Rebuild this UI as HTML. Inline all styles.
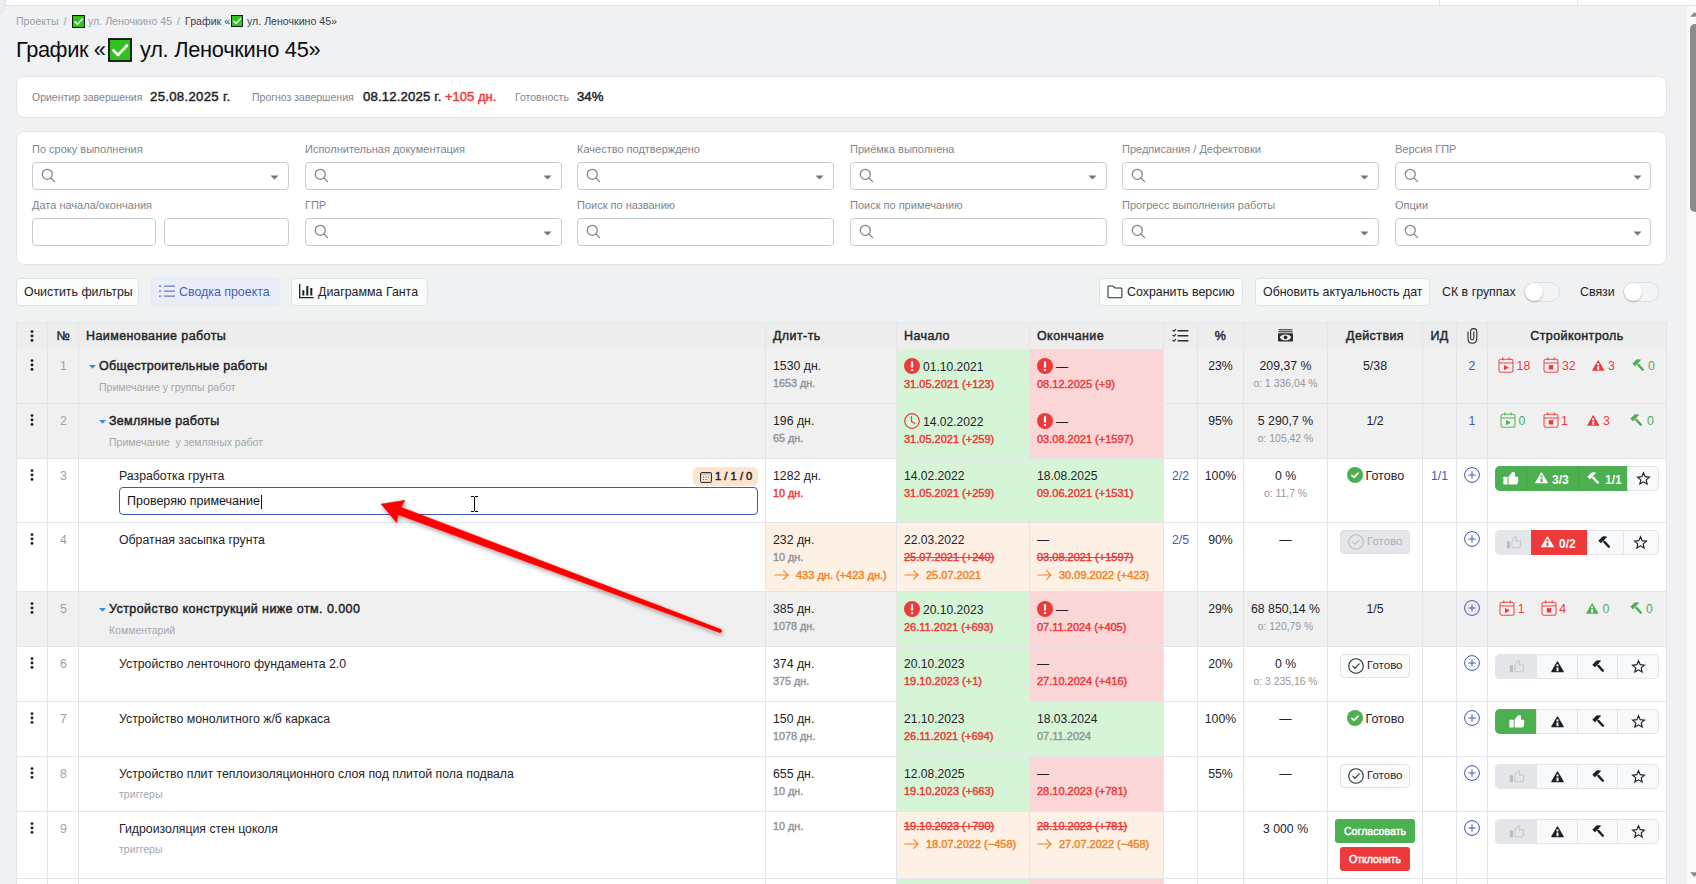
<!DOCTYPE html>
<html><head><meta charset="utf-8"><style>
html,body{margin:0;padding:0;width:1696px;height:884px;overflow:hidden;background:#f0f1f3;font-family:"Liberation Sans", sans-serif;}
.r{position:absolute;box-sizing:border-box;}
.t{position:absolute;white-space:nowrap;}
.card{background:#fff;border:1px solid #e3e5e9;border-radius:8px;}
.inp{background:#fff;border:1px solid #c8ccd2;border-radius:4px;}
.btn{background:#fafbfb;border:1px solid #dfe2e6;border-radius:4px;}
svg.r{overflow:visible}
</style></head><body>
<div class="r" style="left:0px;top:0px;width:1696px;height:5px;background:#ffffff;"></div>
<div class="r" style="left:0px;top:5px;width:1696px;height:1px;background:#e1e3e7;"></div>
<div class="r" style="left:1439px;top:0px;width:1px;height:5px;background:#e1e3e7;"></div>
<div class="r" style="left:1577px;top:0px;width:1px;height:5px;background:#e1e3e7;"></div>
<div class="r" style="left:-28px;top:-15px;width:34px;height:34px;border-radius:50%;background:#eceef1;border:1px solid #dcdee2"></div>
<div class="t" style="left:16px;top:15.46px;font-size:10.6px;line-height:12.72px;font-weight:400;color:#9aa0a8;">Проекты</div>
<div class="t" style="left:63.5px;top:15.46px;font-size:10.6px;line-height:12.72px;font-weight:400;color:#9aa0a8;">/</div>
<svg class="r" style="left:72px;top:15px" width="13" height="13" viewBox="0 0 24 24"><rect x="1" y="1" width="22" height="22" fill="#31c31d" stroke="#0d0d0d" stroke-width="1.8"/><path d="M5.5 12.5 L10 17 L19 7.5" fill="none" stroke="#fff" stroke-width="2.6" stroke-linecap="round" stroke-linejoin="round"/></svg>
<div class="t" style="left:88px;top:15.46px;font-size:10.6px;line-height:12.72px;font-weight:400;color:#9aa0a8;">ул. Леночкино 45</div>
<div class="t" style="left:177px;top:15.46px;font-size:10.6px;line-height:12.72px;font-weight:400;color:#9aa0a8;">/</div>
<div class="t" style="left:185px;top:15.46px;font-size:10.6px;line-height:12.72px;font-weight:400;color:#3a3f47;">График «</div>
<svg class="r" style="left:231px;top:15px" width="12" height="12" viewBox="0 0 24 24"><rect x="1" y="1" width="22" height="22" fill="#31c31d" stroke="#0d0d0d" stroke-width="1.8"/><path d="M5.5 12.5 L10 17 L19 7.5" fill="none" stroke="#fff" stroke-width="2.6" stroke-linecap="round" stroke-linejoin="round"/></svg>
<div class="t" style="left:247px;top:15.46px;font-size:10.6px;line-height:12.72px;font-weight:400;color:#3a3f47;">ул. Леночкино 45»</div>
<div class="t" style="left:16px;top:36.86px;font-size:21.8px;line-height:26.16px;font-weight:400;color:#0c0d0f;letter-spacing:-0.4px;">График «</div>
<svg class="r" style="left:108px;top:38px" width="24" height="24" viewBox="0 0 24 24"><rect x="1" y="1" width="22" height="22" fill="#31c31d" stroke="#0d0d0d" stroke-width="1.8"/><path d="M5.5 12.5 L10 17 L19 7.5" fill="none" stroke="#fff" stroke-width="2.6" stroke-linecap="round" stroke-linejoin="round"/></svg>
<div class="t" style="left:140px;top:36.86px;font-size:21.8px;line-height:26.16px;font-weight:400;color:#0c0d0f;letter-spacing:-0.27px;">ул. Леночкино 45»</div>
<div class="r card" style="left:16px;top:76px;width:1651px;height:42px;"></div>
<div class="t" style="left:32px;top:90.56px;font-size:10.5px;line-height:12.6px;font-weight:400;color:#80858d;">Ориентир завершения</div>
<div class="t" style="left:150px;top:89.00px;font-size:13.2px;line-height:15.84px;font-weight:400;color:#1f2328;-webkit-text-stroke:0.45px #1f2328;letter-spacing:0.3px;">25.08.2025 г.</div>
<div class="t" style="left:252px;top:90.56px;font-size:10.5px;line-height:12.6px;font-weight:400;color:#80858d;">Прогноз завершения</div>
<div class="t" style="left:363px;top:89.00px;font-size:13.2px;line-height:15.84px;font-weight:400;color:#1f2328;-webkit-text-stroke:0.45px #1f2328;letter-spacing:0.15px;">08.12.2025 г.</div>
<div class="t" style="left:445px;top:89.19px;font-size:13px;line-height:15.6px;font-weight:400;color:#ee3a3a;-webkit-text-stroke:0.45px #ee3a3a;">+105 дн.</div>
<div class="t" style="left:515px;top:90.56px;font-size:10.5px;line-height:12.6px;font-weight:400;color:#80858d;">Готовность</div>
<div class="t" style="left:577px;top:89.00px;font-size:13.2px;line-height:15.84px;font-weight:400;color:#1f2328;-webkit-text-stroke:0.45px #1f2328;">34%</div>
<div class="r card" style="left:16px;top:131px;width:1651px;height:134px;"></div>
<div class="t" style="left:32px;top:143.09px;font-size:11px;line-height:13.2px;font-weight:400;color:#80858d;">По сроку выполнения</div>
<div class="r inp" style="left:32px;top:162px;width:257px;height:28px;"></div>
<svg class="r" style="left:41px;top:168px" width="15" height="15" viewBox="0 0 15 15"><circle cx="6.3" cy="6.3" r="5" fill="none" stroke="#7e848c" stroke-width="1.25"/><path d="M10 10 L13.6 13.6" stroke="#7e848c" stroke-width="1.3" stroke-linecap="round"/></svg>
<svg class="r" style="left:270px;top:175px" width="9" height="5" viewBox="0 0 9 5"><path d="M0.5 0.5 H8.5 L4.5 4.5 Z" fill="#6f757d"/></svg>
<div class="t" style="left:32px;top:199.09px;font-size:11px;line-height:13.2px;font-weight:400;color:#80858d;">Дата начала/окончания</div>
<div class="r inp" style="left:32px;top:218px;width:124px;height:28px;"></div>
<div class="r inp" style="left:164px;top:218px;width:125px;height:28px;"></div>
<div class="t" style="left:305px;top:143.09px;font-size:11px;line-height:13.2px;font-weight:400;color:#80858d;">Исполнительная документация</div>
<div class="r inp" style="left:305px;top:162px;width:257px;height:28px;"></div>
<svg class="r" style="left:314px;top:168px" width="15" height="15" viewBox="0 0 15 15"><circle cx="6.3" cy="6.3" r="5" fill="none" stroke="#7e848c" stroke-width="1.25"/><path d="M10 10 L13.6 13.6" stroke="#7e848c" stroke-width="1.3" stroke-linecap="round"/></svg>
<svg class="r" style="left:543px;top:175px" width="9" height="5" viewBox="0 0 9 5"><path d="M0.5 0.5 H8.5 L4.5 4.5 Z" fill="#6f757d"/></svg>
<div class="t" style="left:305px;top:199.09px;font-size:11px;line-height:13.2px;font-weight:400;color:#80858d;">ГПР</div>
<div class="r inp" style="left:305px;top:218px;width:257px;height:28px;"></div>
<svg class="r" style="left:314px;top:224px" width="15" height="15" viewBox="0 0 15 15"><circle cx="6.3" cy="6.3" r="5" fill="none" stroke="#7e848c" stroke-width="1.25"/><path d="M10 10 L13.6 13.6" stroke="#7e848c" stroke-width="1.3" stroke-linecap="round"/></svg>
<svg class="r" style="left:543px;top:231px" width="9" height="5" viewBox="0 0 9 5"><path d="M0.5 0.5 H8.5 L4.5 4.5 Z" fill="#6f757d"/></svg>
<div class="t" style="left:577px;top:143.09px;font-size:11px;line-height:13.2px;font-weight:400;color:#80858d;">Качество подтверждено</div>
<div class="r inp" style="left:577px;top:162px;width:257px;height:28px;"></div>
<svg class="r" style="left:586px;top:168px" width="15" height="15" viewBox="0 0 15 15"><circle cx="6.3" cy="6.3" r="5" fill="none" stroke="#7e848c" stroke-width="1.25"/><path d="M10 10 L13.6 13.6" stroke="#7e848c" stroke-width="1.3" stroke-linecap="round"/></svg>
<svg class="r" style="left:815px;top:175px" width="9" height="5" viewBox="0 0 9 5"><path d="M0.5 0.5 H8.5 L4.5 4.5 Z" fill="#6f757d"/></svg>
<div class="t" style="left:577px;top:199.09px;font-size:11px;line-height:13.2px;font-weight:400;color:#80858d;">Поиск по названию</div>
<div class="r inp" style="left:577px;top:218px;width:257px;height:28px;"></div>
<svg class="r" style="left:586px;top:224px" width="15" height="15" viewBox="0 0 15 15"><circle cx="6.3" cy="6.3" r="5" fill="none" stroke="#7e848c" stroke-width="1.25"/><path d="M10 10 L13.6 13.6" stroke="#7e848c" stroke-width="1.3" stroke-linecap="round"/></svg>
<div class="t" style="left:850px;top:143.09px;font-size:11px;line-height:13.2px;font-weight:400;color:#80858d;">Приёмка выполнена</div>
<div class="r inp" style="left:850px;top:162px;width:257px;height:28px;"></div>
<svg class="r" style="left:859px;top:168px" width="15" height="15" viewBox="0 0 15 15"><circle cx="6.3" cy="6.3" r="5" fill="none" stroke="#7e848c" stroke-width="1.25"/><path d="M10 10 L13.6 13.6" stroke="#7e848c" stroke-width="1.3" stroke-linecap="round"/></svg>
<svg class="r" style="left:1088px;top:175px" width="9" height="5" viewBox="0 0 9 5"><path d="M0.5 0.5 H8.5 L4.5 4.5 Z" fill="#6f757d"/></svg>
<div class="t" style="left:850px;top:199.09px;font-size:11px;line-height:13.2px;font-weight:400;color:#80858d;">Поиск по примечанию</div>
<div class="r inp" style="left:850px;top:218px;width:257px;height:28px;"></div>
<svg class="r" style="left:859px;top:224px" width="15" height="15" viewBox="0 0 15 15"><circle cx="6.3" cy="6.3" r="5" fill="none" stroke="#7e848c" stroke-width="1.25"/><path d="M10 10 L13.6 13.6" stroke="#7e848c" stroke-width="1.3" stroke-linecap="round"/></svg>
<div class="t" style="left:1122px;top:143.09px;font-size:11px;line-height:13.2px;font-weight:400;color:#80858d;">Предписания / Дефектовки</div>
<div class="r inp" style="left:1122px;top:162px;width:257px;height:28px;"></div>
<svg class="r" style="left:1131px;top:168px" width="15" height="15" viewBox="0 0 15 15"><circle cx="6.3" cy="6.3" r="5" fill="none" stroke="#7e848c" stroke-width="1.25"/><path d="M10 10 L13.6 13.6" stroke="#7e848c" stroke-width="1.3" stroke-linecap="round"/></svg>
<svg class="r" style="left:1360px;top:175px" width="9" height="5" viewBox="0 0 9 5"><path d="M0.5 0.5 H8.5 L4.5 4.5 Z" fill="#6f757d"/></svg>
<div class="t" style="left:1122px;top:199.09px;font-size:11px;line-height:13.2px;font-weight:400;color:#80858d;">Прогресс выполнения работы</div>
<div class="r inp" style="left:1122px;top:218px;width:257px;height:28px;"></div>
<svg class="r" style="left:1131px;top:224px" width="15" height="15" viewBox="0 0 15 15"><circle cx="6.3" cy="6.3" r="5" fill="none" stroke="#7e848c" stroke-width="1.25"/><path d="M10 10 L13.6 13.6" stroke="#7e848c" stroke-width="1.3" stroke-linecap="round"/></svg>
<svg class="r" style="left:1360px;top:231px" width="9" height="5" viewBox="0 0 9 5"><path d="M0.5 0.5 H8.5 L4.5 4.5 Z" fill="#6f757d"/></svg>
<div class="t" style="left:1395px;top:143.09px;font-size:11px;line-height:13.2px;font-weight:400;color:#80858d;">Версия ГПР</div>
<div class="r inp" style="left:1395px;top:162px;width:256px;height:28px;"></div>
<svg class="r" style="left:1404px;top:168px" width="15" height="15" viewBox="0 0 15 15"><circle cx="6.3" cy="6.3" r="5" fill="none" stroke="#7e848c" stroke-width="1.25"/><path d="M10 10 L13.6 13.6" stroke="#7e848c" stroke-width="1.3" stroke-linecap="round"/></svg>
<svg class="r" style="left:1633px;top:175px" width="9" height="5" viewBox="0 0 9 5"><path d="M0.5 0.5 H8.5 L4.5 4.5 Z" fill="#6f757d"/></svg>
<div class="t" style="left:1395px;top:199.09px;font-size:11px;line-height:13.2px;font-weight:400;color:#80858d;">Опции</div>
<div class="r inp" style="left:1395px;top:218px;width:256px;height:28px;"></div>
<svg class="r" style="left:1404px;top:224px" width="15" height="15" viewBox="0 0 15 15"><circle cx="6.3" cy="6.3" r="5" fill="none" stroke="#7e848c" stroke-width="1.25"/><path d="M10 10 L13.6 13.6" stroke="#7e848c" stroke-width="1.3" stroke-linecap="round"/></svg>
<svg class="r" style="left:1633px;top:231px" width="9" height="5" viewBox="0 0 9 5"><path d="M0.5 0.5 H8.5 L4.5 4.5 Z" fill="#6f757d"/></svg>
<div class="r btn" style="left:16px;top:278px;width:123px;height:28px;"></div>
<div class="t" style="left:24px;top:284.76px;font-size:12.4px;line-height:14.88px;font-weight:400;color:#1f2328;">Очистить фильтры</div>
<div class="r btn" style="left:151px;top:278px;width:128px;height:28px;background:#e8edf8;border-color:#e2e7f3"></div>
<svg class="r" style="left:159px;top:285px" width="17" height="13"><rect x="0" y="0.6" width="2.3" height="1" fill="#4a5db8"/><rect x="5" y="0.6" width="11" height="1" fill="#4a5db8"/><rect x="0" y="5.6" width="2.3" height="1" fill="#4a5db8"/><rect x="5" y="5.6" width="11" height="1" fill="#4a5db8"/><rect x="0" y="10.6" width="2.3" height="1" fill="#4a5db8"/><rect x="5" y="10.6" width="11" height="1" fill="#4a5db8"/></svg>
<div class="t" style="left:179px;top:284.76px;font-size:12.4px;line-height:14.88px;font-weight:400;color:#4a5db8;">Сводка проекта</div>
<div class="r btn" style="left:291px;top:278px;width:137px;height:28px;"></div>
<svg class="r" style="left:299px;top:284px" width="15" height="15" viewBox="0 0 15 15"><path d="M0.7 0 V13.7 H14.6" fill="none" stroke="#1f2328" stroke-width="1.3"/><rect x="3.3" y="6.3" width="2" height="5.2" fill="#1f2328"/><rect x="7.3" y="2" width="2" height="9.5" fill="#1f2328"/><rect x="11.3" y="4" width="2" height="7.5" fill="#1f2328"/></svg>
<div class="t" style="left:318px;top:284.76px;font-size:12.4px;line-height:14.88px;font-weight:400;color:#1f2328;">Диаграмма Ганта</div>
<div class="r btn" style="left:1099px;top:278px;width:144px;height:28px;"></div>
<svg class="r" style="left:1107px;top:284.5px" width="16" height="14" viewBox="0 0 16 14"><path d="M1 1.8 Q1 0.9 1.9 0.9 H5.6 Q6 0.9 6.3 1.2 L7.8 2.9 H14 Q14.9 2.9 14.9 3.8 V11.8 Q14.9 12.7 14 12.7 H1.9 Q1 12.7 1 11.8 Z" fill="none" stroke="#2a2e34" stroke-width="1.05"/></svg>
<div class="t" style="left:1127px;top:284.76px;font-size:12.4px;line-height:14.88px;font-weight:400;color:#1f2328;">Сохранить версию</div>
<div class="r btn" style="left:1255px;top:278px;width:175px;height:28px;"></div>
<div class="t" style="left:1263px;top:284.76px;font-size:12.4px;line-height:14.88px;font-weight:400;color:#1f2328;">Обновить актуальность дат</div>
<div class="t" style="left:1442px;top:284.76px;font-size:12.4px;line-height:14.88px;font-weight:400;color:#1f2328;">СК в группах</div>
<div class="r" style="left:1524px;top:282px;width:36px;height:20px;border-radius:10px;background:#f3f4f6;border:1px solid #dcdfe3"></div>
<div class="r" style="left:1525px;top:283px;width:18px;height:18px;border-radius:50%;background:#fff;box-shadow:0 1px 2px rgba(0,0,0,.25)"></div>
<div class="t" style="left:1580px;top:284.76px;font-size:12.4px;line-height:14.88px;font-weight:400;color:#1f2328;">Связи</div>
<div class="r" style="left:1623px;top:282px;width:36px;height:20px;border-radius:10px;background:#f3f4f6;border:1px solid #dcdfe3"></div>
<div class="r" style="left:1624px;top:283px;width:18px;height:18px;border-radius:50%;background:#fff;box-shadow:0 1px 2px rgba(0,0,0,.25)"></div>
<div class="r" style="left:16px;top:322px;width:1651px;height:1px;background:#e3e5e9;"></div>
<div class="r" style="left:17px;top:323px;width:1649px;height:26px;background:#ededed;"></div>
<div class="r" style="left:17px;top:349px;width:1649px;height:54px;background:#f0f0f0;"></div>
<div class="r" style="left:897px;top:349px;width:132px;height:54px;background:#d6f5d6;"></div>
<div class="r" style="left:1030px;top:349px;width:133px;height:54px;background:#fbd6d6;"></div>
<div class="r" style="left:16px;top:403px;width:1651px;height:1px;background:#e3e5e9;"></div>
<div class="r" style="left:17px;top:404px;width:1649px;height:54px;background:#f0f0f0;"></div>
<div class="r" style="left:897px;top:404px;width:132px;height:54px;background:#d6f5d6;"></div>
<div class="r" style="left:1030px;top:404px;width:133px;height:54px;background:#fbd6d6;"></div>
<div class="r" style="left:16px;top:458px;width:1651px;height:1px;background:#e3e5e9;"></div>
<div class="r" style="left:17px;top:459px;width:1649px;height:63px;background:#ffffff;"></div>
<div class="r" style="left:897px;top:459px;width:132px;height:63px;background:#d6f5d6;"></div>
<div class="r" style="left:1030px;top:459px;width:133px;height:63px;background:#d6f5d6;"></div>
<div class="r" style="left:16px;top:522px;width:1651px;height:1px;background:#e3e5e9;"></div>
<div class="r" style="left:17px;top:523px;width:1649px;height:68px;background:#ffffff;"></div>
<div class="r" style="left:766px;top:523px;width:130px;height:68px;background:#fdf0e5;"></div>
<div class="r" style="left:897px;top:523px;width:132px;height:68px;background:#fdf0e5;"></div>
<div class="r" style="left:1030px;top:523px;width:133px;height:68px;background:#fdf0e5;"></div>
<div class="r" style="left:16px;top:591px;width:1651px;height:1px;background:#e3e5e9;"></div>
<div class="r" style="left:17px;top:592px;width:1649px;height:54px;background:#f0f0f0;"></div>
<div class="r" style="left:897px;top:592px;width:132px;height:54px;background:#d6f5d6;"></div>
<div class="r" style="left:1030px;top:592px;width:133px;height:54px;background:#fbd6d6;"></div>
<div class="r" style="left:16px;top:646px;width:1651px;height:1px;background:#e3e5e9;"></div>
<div class="r" style="left:17px;top:647px;width:1649px;height:54px;background:#ffffff;"></div>
<div class="r" style="left:897px;top:647px;width:132px;height:54px;background:#d6f5d6;"></div>
<div class="r" style="left:1030px;top:647px;width:133px;height:54px;background:#fbd6d6;"></div>
<div class="r" style="left:16px;top:701px;width:1651px;height:1px;background:#e3e5e9;"></div>
<div class="r" style="left:17px;top:702px;width:1649px;height:54px;background:#ffffff;"></div>
<div class="r" style="left:897px;top:702px;width:132px;height:54px;background:#d6f5d6;"></div>
<div class="r" style="left:1030px;top:702px;width:133px;height:54px;background:#d6f5d6;"></div>
<div class="r" style="left:16px;top:756px;width:1651px;height:1px;background:#e3e5e9;"></div>
<div class="r" style="left:17px;top:757px;width:1649px;height:54px;background:#ffffff;"></div>
<div class="r" style="left:897px;top:757px;width:132px;height:54px;background:#d6f5d6;"></div>
<div class="r" style="left:1030px;top:757px;width:133px;height:54px;background:#fbd6d6;"></div>
<div class="r" style="left:16px;top:811px;width:1651px;height:1px;background:#e3e5e9;"></div>
<div class="r" style="left:17px;top:812px;width:1649px;height:66px;background:#ffffff;"></div>
<div class="r" style="left:897px;top:812px;width:132px;height:66px;background:#fdf0e5;"></div>
<div class="r" style="left:1030px;top:812px;width:133px;height:66px;background:#fdf0e5;"></div>
<div class="r" style="left:16px;top:878px;width:1651px;height:1px;background:#e3e5e9;"></div>
<div class="r" style="left:17px;top:879px;width:1649px;height:21px;background:#ffffff;"></div>
<div class="r" style="left:897px;top:879px;width:132px;height:21px;background:#d6f5d6;"></div>
<div class="r" style="left:1030px;top:879px;width:133px;height:21px;background:#fbd6d6;"></div>
<div class="r" style="left:16px;top:900px;width:1651px;height:1px;background:#e3e5e9;"></div>
<div class="r" style="left:16px;top:322px;width:1px;height:562px;background:#e3e5e9;"></div>
<div class="r" style="left:47px;top:322px;width:1px;height:562px;background:#e3e5e9;"></div>
<div class="r" style="left:78px;top:322px;width:1px;height:562px;background:#e3e5e9;"></div>
<div class="r" style="left:765px;top:322px;width:1px;height:562px;background:#e3e5e9;"></div>
<div class="r" style="left:896px;top:322px;width:1px;height:562px;background:#e3e5e9;"></div>
<div class="r" style="left:1029px;top:322px;width:1px;height:562px;background:#e3e5e9;"></div>
<div class="r" style="left:1163px;top:322px;width:1px;height:562px;background:#e3e5e9;"></div>
<div class="r" style="left:1197px;top:322px;width:1px;height:562px;background:#e3e5e9;"></div>
<div class="r" style="left:1243px;top:322px;width:1px;height:562px;background:#e3e5e9;"></div>
<div class="r" style="left:1327px;top:322px;width:1px;height:562px;background:#e3e5e9;"></div>
<div class="r" style="left:1422px;top:322px;width:1px;height:562px;background:#e3e5e9;"></div>
<div class="r" style="left:1456px;top:322px;width:1px;height:562px;background:#e3e5e9;"></div>
<div class="r" style="left:1487px;top:322px;width:1px;height:562px;background:#e3e5e9;"></div>
<div class="r" style="left:1666px;top:322px;width:1px;height:562px;background:#e3e5e9;"></div>
<svg class="r" style="left:30px;top:330px" width="4" height="12" viewBox="0 0 4 12"><circle cx="2" cy="1.6" r="1.45" fill="#1c1f24"/><circle cx="2" cy="6" r="1.45" fill="#1c1f24"/><circle cx="2" cy="10.4" r="1.45" fill="#1c1f24"/></svg>
<div class="t" style="left:48px;top:328.67px;font-size:12.5px;line-height:15.0px;font-weight:400;color:#24272c;-webkit-text-stroke:0.45px #24272c;width:31px;text-align:center;letter-spacing:0.4px;">№</div>
<div class="t" style="left:86px;top:328.67px;font-size:12.5px;line-height:15.0px;font-weight:400;color:#24272c;-webkit-text-stroke:0.45px #24272c;letter-spacing:0.4px;">Наименование работы</div>
<div class="t" style="left:773px;top:328.67px;font-size:12.5px;line-height:15.0px;font-weight:400;color:#24272c;-webkit-text-stroke:0.45px #24272c;letter-spacing:0.4px;">Длит-ть</div>
<div class="t" style="left:904px;top:328.67px;font-size:12.5px;line-height:15.0px;font-weight:400;color:#24272c;-webkit-text-stroke:0.45px #24272c;letter-spacing:0.4px;">Начало</div>
<div class="t" style="left:1037px;top:328.67px;font-size:12.5px;line-height:15.0px;font-weight:400;color:#24272c;-webkit-text-stroke:0.45px #24272c;letter-spacing:0.4px;">Окончание</div>
<svg class="r" style="left:1172px;top:329px" width="17" height="14"><path d="M0.6 1.0 L2 2.2 L4 0.20000000000000018" fill="none" stroke="#2a2d33" stroke-width="1.1"/><rect x="5.5" y="0.9000000000000001" width="11" height="1.5" rx="0.6" fill="#2a2d33"/><path d="M0.6 6.0 L2 7.199999999999999 L4 5.199999999999999" fill="none" stroke="#2a2d33" stroke-width="1.1"/><rect x="5.5" y="5.8999999999999995" width="11" height="1.5" rx="0.6" fill="#2a2d33"/><path d="M0.6 11.0 L2 12.2 L4 10.2" fill="none" stroke="#2a2d33" stroke-width="1.1"/><rect x="5.5" y="10.9" width="11" height="1.5" rx="0.6" fill="#2a2d33"/></svg>
<div class="t" style="left:1198px;top:328.67px;font-size:12.5px;line-height:15.0px;font-weight:400;color:#24272c;-webkit-text-stroke:0.45px #24272c;width:45px;text-align:center;letter-spacing:0.4px;">%</div>
<svg class="r" style="left:1278px;top:329px" width="15" height="13" viewBox="0 0 15 13"><rect x="0.5" y="0" width="14" height="1.4" fill="#2a2d33" opacity="0.75"/><rect x="0.5" y="2" width="14" height="1.4" fill="#2a2d33" opacity="0.75"/><rect x="0" y="4.2" width="15" height="8.3" rx="1" fill="#2a2d33"/><ellipse cx="7.5" cy="8.35" rx="5.5" ry="2.9" fill="#ededed"/><circle cx="7.5" cy="8.35" r="1.9" fill="#2a2d33"/></svg>
<div class="t" style="left:1328px;top:328.67px;font-size:12.5px;line-height:15.0px;font-weight:400;color:#24272c;-webkit-text-stroke:0.45px #24272c;width:94px;text-align:center;letter-spacing:0.4px;">Действия</div>
<div class="t" style="left:1423px;top:328.67px;font-size:12.5px;line-height:15.0px;font-weight:400;color:#24272c;-webkit-text-stroke:0.45px #24272c;width:33px;text-align:center;letter-spacing:0.4px;">ИД</div>
<svg class="r" style="left:1467px;top:327.5px" width="11" height="16" viewBox="0 0 11 16"><path d="M1 3.5 V10.5 Q1 15.3 5.3 15.3 Q9.8 15.3 9.8 10.5 V4 Q9.8 0.6 6.8 0.6 Q3.6 0.6 3.6 4 V10.2 Q3.6 11.8 5.2 11.8 Q6.8 11.8 6.8 10.2 V3.5" fill="none" stroke="#2a2d33" stroke-width="1.1"/></svg>
<div class="t" style="left:1488px;top:328.67px;font-size:12.5px;line-height:15.0px;font-weight:400;color:#24272c;-webkit-text-stroke:0.45px #24272c;width:178px;text-align:center;letter-spacing:0.4px;">Стройконтроль</div>
<svg class="r" style="left:30.3px;top:358.8px" width="4" height="12" viewBox="0 0 4 12"><circle cx="2" cy="1.6" r="1.45" fill="#1c1f24"/><circle cx="2" cy="6" r="1.45" fill="#1c1f24"/><circle cx="2" cy="10.4" r="1.45" fill="#1c1f24"/></svg>
<div class="t" style="left:48px;top:358.86px;font-size:12.3px;line-height:14.76px;font-weight:400;color:#9aa0a8;width:31px;text-align:center;">1</div>
<svg class="r" style="left:30.3px;top:413.8px" width="4" height="12" viewBox="0 0 4 12"><circle cx="2" cy="1.6" r="1.45" fill="#1c1f24"/><circle cx="2" cy="6" r="1.45" fill="#1c1f24"/><circle cx="2" cy="10.4" r="1.45" fill="#1c1f24"/></svg>
<div class="t" style="left:48px;top:413.86px;font-size:12.3px;line-height:14.76px;font-weight:400;color:#9aa0a8;width:31px;text-align:center;">2</div>
<svg class="r" style="left:30.3px;top:468.8px" width="4" height="12" viewBox="0 0 4 12"><circle cx="2" cy="1.6" r="1.45" fill="#1c1f24"/><circle cx="2" cy="6" r="1.45" fill="#1c1f24"/><circle cx="2" cy="10.4" r="1.45" fill="#1c1f24"/></svg>
<div class="t" style="left:48px;top:468.86px;font-size:12.3px;line-height:14.76px;font-weight:400;color:#9aa0a8;width:31px;text-align:center;">3</div>
<svg class="r" style="left:30.3px;top:532.8px" width="4" height="12" viewBox="0 0 4 12"><circle cx="2" cy="1.6" r="1.45" fill="#1c1f24"/><circle cx="2" cy="6" r="1.45" fill="#1c1f24"/><circle cx="2" cy="10.4" r="1.45" fill="#1c1f24"/></svg>
<div class="t" style="left:48px;top:532.86px;font-size:12.3px;line-height:14.76px;font-weight:400;color:#9aa0a8;width:31px;text-align:center;">4</div>
<svg class="r" style="left:30.3px;top:601.8px" width="4" height="12" viewBox="0 0 4 12"><circle cx="2" cy="1.6" r="1.45" fill="#1c1f24"/><circle cx="2" cy="6" r="1.45" fill="#1c1f24"/><circle cx="2" cy="10.4" r="1.45" fill="#1c1f24"/></svg>
<div class="t" style="left:48px;top:601.86px;font-size:12.3px;line-height:14.76px;font-weight:400;color:#9aa0a8;width:31px;text-align:center;">5</div>
<svg class="r" style="left:30.3px;top:656.8px" width="4" height="12" viewBox="0 0 4 12"><circle cx="2" cy="1.6" r="1.45" fill="#1c1f24"/><circle cx="2" cy="6" r="1.45" fill="#1c1f24"/><circle cx="2" cy="10.4" r="1.45" fill="#1c1f24"/></svg>
<div class="t" style="left:48px;top:656.86px;font-size:12.3px;line-height:14.76px;font-weight:400;color:#9aa0a8;width:31px;text-align:center;">6</div>
<svg class="r" style="left:30.3px;top:711.8px" width="4" height="12" viewBox="0 0 4 12"><circle cx="2" cy="1.6" r="1.45" fill="#1c1f24"/><circle cx="2" cy="6" r="1.45" fill="#1c1f24"/><circle cx="2" cy="10.4" r="1.45" fill="#1c1f24"/></svg>
<div class="t" style="left:48px;top:711.86px;font-size:12.3px;line-height:14.76px;font-weight:400;color:#9aa0a8;width:31px;text-align:center;">7</div>
<svg class="r" style="left:30.3px;top:766.8px" width="4" height="12" viewBox="0 0 4 12"><circle cx="2" cy="1.6" r="1.45" fill="#1c1f24"/><circle cx="2" cy="6" r="1.45" fill="#1c1f24"/><circle cx="2" cy="10.4" r="1.45" fill="#1c1f24"/></svg>
<div class="t" style="left:48px;top:766.86px;font-size:12.3px;line-height:14.76px;font-weight:400;color:#9aa0a8;width:31px;text-align:center;">8</div>
<svg class="r" style="left:30.3px;top:821.8px" width="4" height="12" viewBox="0 0 4 12"><circle cx="2" cy="1.6" r="1.45" fill="#1c1f24"/><circle cx="2" cy="6" r="1.45" fill="#1c1f24"/><circle cx="2" cy="10.4" r="1.45" fill="#1c1f24"/></svg>
<div class="t" style="left:48px;top:821.86px;font-size:12.3px;line-height:14.76px;font-weight:400;color:#9aa0a8;width:31px;text-align:center;">9</div>
<svg class="r" style="left:89px;top:365px" width="7" height="4" viewBox="0 0 7 4"><path d="M0 0 H7 L3.5 3.8 Z" fill="#2f8ff0"/></svg>
<div class="t" style="left:99px;top:358.67px;font-size:12.5px;line-height:15.0px;font-weight:400;color:#1f2328;-webkit-text-stroke:0.45px #1f2328;letter-spacing:0.3px;">Общестроительные работы</div>
<div class="t" style="left:99px;top:380.56px;font-size:10.5px;line-height:12.6px;font-weight:400;color:#a3a7ad;">Примечание у группы работ</div>
<div class="t" style="left:773px;top:358.86px;font-size:12.3px;line-height:14.76px;font-weight:400;color:#1f2328;">1530 дн.</div>
<div class="t" style="left:773px;top:377.28px;font-size:10.8px;line-height:12.96px;font-weight:400;color:#93979e;-webkit-text-stroke:0.45px #93979e;">1653 дн.</div>
<svg class="r" style="left:904px;top:358px" width="16" height="16" viewBox="0 0 16 16"><circle cx="8" cy="8" r="8" fill="#ee3a3a"/><rect x="6.9" y="3.2" width="2.2" height="6.3" rx="0.6" fill="#fff"/><rect x="6.9" y="10.9" width="2.2" height="2.1" rx="0.4" fill="#fff"/></svg>
<div class="t" style="left:923px;top:360.04px;font-size:12.1px;line-height:14.52px;font-weight:400;color:#1f2328;">01.10.2021</div>
<div class="t" style="left:904px;top:378.09px;font-size:11px;line-height:13.2px;font-weight:400;color:#ee3a3a;-webkit-text-stroke:0.45px #ee3a3a;">31.05.2021 (+123)</div>
<svg class="r" style="left:1036.5px;top:358px" width="16" height="16" viewBox="0 0 16 16"><circle cx="8" cy="8" r="8" fill="#ee3a3a"/><rect x="6.9" y="3.2" width="2.2" height="6.3" rx="0.6" fill="#fff"/><rect x="6.9" y="10.9" width="2.2" height="2.1" rx="0.4" fill="#fff"/></svg>
<div class="t" style="left:1056px;top:360.04px;font-size:12.1px;line-height:14.52px;font-weight:400;color:#1f2328;">—</div>
<div class="t" style="left:1037px;top:378.09px;font-size:11px;line-height:13.2px;font-weight:400;color:#ee3a3a;-webkit-text-stroke:0.45px #ee3a3a;">08.12.2025 (+9)</div>
<div class="t" style="left:1198px;top:358.86px;font-size:12.3px;line-height:14.76px;font-weight:400;color:#1f2328;width:45px;text-align:center;">23%</div>
<div class="t" style="left:1244px;top:358.86px;font-size:12.3px;line-height:14.76px;font-weight:400;color:#1f2328;width:83px;text-align:center;">209,37 %</div>
<div class="t" style="left:1244px;top:378.15px;font-size:10.4px;line-height:12.48px;font-weight:400;color:#93979e;width:83px;text-align:center;">о: 1 336,04 %</div>
<div class="t" style="left:1328px;top:358.86px;font-size:12.3px;line-height:14.76px;font-weight:400;color:#1f2328;width:94px;text-align:center;">5/38</div>
<div class="t" style="left:1457px;top:358.86px;font-size:12.3px;line-height:14.76px;font-weight:400;color:#4458b8;width:30px;text-align:center;">2</div>
<svg class="r" style="left:1498px;top:357px" width="16" height="16" viewBox="0 0 16 16"><path d="M4.8 0.5 V3.3 M11.2 0.5 V3.3" stroke="#ee3a3a" stroke-width="1.1"/><rect x="1" y="2.3" width="14" height="13" rx="2" fill="none" stroke="#ee3a3a" stroke-width="1.05" opacity="0.9"/><path d="M1 6 H15" stroke="#ee3a3a" stroke-width="1.05" opacity="0.9"/><path d="M6 8 L10.8 10.6 L6 13.2 Z" fill="#ee3a3a"/></svg>
<div class="t" style="left:1516.6px;top:358.86px;font-size:12.3px;line-height:14.76px;font-weight:400;color:#ee3a3a;">18</div>
<svg class="r" style="left:1543px;top:357px" width="16" height="16" viewBox="0 0 16 16"><path d="M4.8 0.5 V3.3 M11.2 0.5 V3.3" stroke="#ee3a3a" stroke-width="1.1"/><rect x="1" y="2.3" width="14" height="13" rx="2" fill="none" stroke="#ee3a3a" stroke-width="1.05" opacity="0.9"/><path d="M1 6 H15" stroke="#ee3a3a" stroke-width="1.05" opacity="0.9"/><rect x="5.8" y="8.1" width="4.4" height="4.4" fill="#ee3a3a"/></svg>
<div class="t" style="left:1562px;top:358.86px;font-size:12.3px;line-height:14.76px;font-weight:400;color:#ee3a3a;">32</div>
<svg class="r" style="left:1592px;top:360px" width="12.5" height="11.06" viewBox="0 0 13 11.5"><path d="M6.5 0.3 Q6.9 0.3 7.1 0.7 L12.8 10.6 Q13.1 11.3 12.3 11.3 H0.7 Q-0.1 11.3 0.2 10.6 L5.9 0.7 Q6.1 0.3 6.5 0.3 Z" fill="#ee3a3a"/><rect x="5.5" y="3.4" width="2" height="2" fill="#fff"/><rect x="5.5" y="6.5" width="2" height="3.7" fill="#fff"/></svg>
<div class="t" style="left:1608px;top:358.86px;font-size:12.3px;line-height:14.76px;font-weight:400;color:#ee3a3a;">3</div>
<svg class="r" style="left:1632px;top:359px" width="12" height="12" viewBox="0 0 13 13"><path d="M0.3 5.2 L4.6 0.9 Q5.3 0.3 6.3 0.3 L9.4 0.6 L9.6 1.5 L8.4 2.3 L7.6 3.4 L3.2 7.8 Z" fill="#4caf50"/><path d="M6.9 6.4 L11.8 11.6" stroke="#4caf50" stroke-width="2.6" stroke-linecap="round"/></svg>
<div class="t" style="left:1648px;top:358.86px;font-size:12.3px;line-height:14.76px;font-weight:400;color:#4caf50;">0</div>
<svg class="r" style="left:99px;top:420px" width="7" height="4" viewBox="0 0 7 4"><path d="M0 0 H7 L3.5 3.8 Z" fill="#2f8ff0"/></svg>
<div class="t" style="left:109px;top:413.67px;font-size:12.5px;line-height:15.0px;font-weight:400;color:#1f2328;-webkit-text-stroke:0.45px #1f2328;letter-spacing:0.3px;">Земляные работы</div>
<div class="t" style="left:109px;top:435.56px;font-size:10.5px;line-height:12.6px;font-weight:400;color:#a3a7ad;">Примечание&nbsp; у земляных работ</div>
<div class="t" style="left:773px;top:413.86px;font-size:12.3px;line-height:14.76px;font-weight:400;color:#1f2328;">196 дн.</div>
<div class="t" style="left:773px;top:432.28px;font-size:10.8px;line-height:12.96px;font-weight:400;color:#93979e;-webkit-text-stroke:0.45px #93979e;">65 дн.</div>
<svg class="r" style="left:904px;top:413px" width="16" height="16" viewBox="0 0 16 16"><circle cx="8" cy="8" r="7.3" fill="none" stroke="#ee3a3a" stroke-width="1.2"/><path d="M7.5 3.8 V8.5 L10.8 10.5" fill="none" stroke="#ee3a3a" stroke-width="1.2" stroke-linecap="round"/></svg>
<div class="t" style="left:923px;top:415.04px;font-size:12.1px;line-height:14.52px;font-weight:400;color:#1f2328;">14.02.2022</div>
<div class="t" style="left:904px;top:433.09px;font-size:11px;line-height:13.2px;font-weight:400;color:#ee3a3a;-webkit-text-stroke:0.45px #ee3a3a;">31.05.2021 (+259)</div>
<svg class="r" style="left:1036.5px;top:413px" width="16" height="16" viewBox="0 0 16 16"><circle cx="8" cy="8" r="8" fill="#ee3a3a"/><rect x="6.9" y="3.2" width="2.2" height="6.3" rx="0.6" fill="#fff"/><rect x="6.9" y="10.9" width="2.2" height="2.1" rx="0.4" fill="#fff"/></svg>
<div class="t" style="left:1056px;top:415.04px;font-size:12.1px;line-height:14.52px;font-weight:400;color:#1f2328;">—</div>
<div class="t" style="left:1037px;top:433.09px;font-size:11px;line-height:13.2px;font-weight:400;color:#ee3a3a;-webkit-text-stroke:0.45px #ee3a3a;">03.08.2021 (+1597)</div>
<div class="t" style="left:1198px;top:413.86px;font-size:12.3px;line-height:14.76px;font-weight:400;color:#1f2328;width:45px;text-align:center;">95%</div>
<div class="t" style="left:1244px;top:413.86px;font-size:12.3px;line-height:14.76px;font-weight:400;color:#1f2328;width:83px;text-align:center;">5 290,7 %</div>
<div class="t" style="left:1244px;top:433.15px;font-size:10.4px;line-height:12.48px;font-weight:400;color:#93979e;width:83px;text-align:center;">о: 105,42 %</div>
<div class="t" style="left:1328px;top:413.86px;font-size:12.3px;line-height:14.76px;font-weight:400;color:#1f2328;width:94px;text-align:center;">1/2</div>
<div class="t" style="left:1457px;top:413.86px;font-size:12.3px;line-height:14.76px;font-weight:400;color:#4458b8;width:30px;text-align:center;">1</div>
<svg class="r" style="left:1499.5px;top:412px" width="16" height="16" viewBox="0 0 16 16"><path d="M4.8 0.5 V3.3 M11.2 0.5 V3.3" stroke="#4caf50" stroke-width="1.1"/><rect x="1" y="2.3" width="14" height="13" rx="2" fill="none" stroke="#4caf50" stroke-width="1.05" opacity="0.9"/><path d="M1 6 H15" stroke="#4caf50" stroke-width="1.05" opacity="0.9"/><path d="M6 8 L10.8 10.6 L6 13.2 Z" fill="#4caf50"/></svg>
<div class="t" style="left:1518.5px;top:413.86px;font-size:12.3px;line-height:14.76px;font-weight:400;color:#4caf50;">0</div>
<svg class="r" style="left:1543px;top:412px" width="16" height="16" viewBox="0 0 16 16"><path d="M4.8 0.5 V3.3 M11.2 0.5 V3.3" stroke="#ee3a3a" stroke-width="1.1"/><rect x="1" y="2.3" width="14" height="13" rx="2" fill="none" stroke="#ee3a3a" stroke-width="1.05" opacity="0.9"/><path d="M1 6 H15" stroke="#ee3a3a" stroke-width="1.05" opacity="0.9"/><rect x="5.8" y="8.1" width="4.4" height="4.4" fill="#ee3a3a"/></svg>
<div class="t" style="left:1561px;top:413.86px;font-size:12.3px;line-height:14.76px;font-weight:400;color:#ee3a3a;">1</div>
<svg class="r" style="left:1586.5px;top:415px" width="12.5" height="11.06" viewBox="0 0 13 11.5"><path d="M6.5 0.3 Q6.9 0.3 7.1 0.7 L12.8 10.6 Q13.1 11.3 12.3 11.3 H0.7 Q-0.1 11.3 0.2 10.6 L5.9 0.7 Q6.1 0.3 6.5 0.3 Z" fill="#ee3a3a"/><rect x="5.5" y="3.4" width="2" height="2" fill="#fff"/><rect x="5.5" y="6.5" width="2" height="3.7" fill="#fff"/></svg>
<div class="t" style="left:1603px;top:413.86px;font-size:12.3px;line-height:14.76px;font-weight:400;color:#ee3a3a;">3</div>
<svg class="r" style="left:1630px;top:414px" width="12" height="12" viewBox="0 0 13 13"><path d="M0.3 5.2 L4.6 0.9 Q5.3 0.3 6.3 0.3 L9.4 0.6 L9.6 1.5 L8.4 2.3 L7.6 3.4 L3.2 7.8 Z" fill="#4caf50"/><path d="M6.9 6.4 L11.8 11.6" stroke="#4caf50" stroke-width="2.6" stroke-linecap="round"/></svg>
<div class="t" style="left:1647px;top:413.86px;font-size:12.3px;line-height:14.76px;font-weight:400;color:#4caf50;">0</div>
<div class="t" style="left:119px;top:468.86px;font-size:12.3px;line-height:14.76px;font-weight:400;color:#1f2328;">Разработка грунта</div>
<div class="r" style="left:693px;top:467px;width:65px;height:19px;background:#fde4cf;border-radius:5px"></div>
<svg class="r" style="left:700px;top:471.5px" width="12" height="11" viewBox="0 0 12 11"><rect x="0.6" y="0.6" width="10.8" height="9.8" rx="0.8" fill="none" stroke="#1f2328" stroke-width="1"/><rect x="0.6" y="0.6" width="10.8" height="2.4" fill="#1f2328" opacity="0.15"/><g fill="#6a4fb0"><rect x="3" y="4.6" width="1" height="1"/><rect x="5.5" y="4.6" width="1" height="1"/><rect x="8" y="4.6" width="1" height="1"/><rect x="3" y="7" width="1" height="1"/><rect x="5.5" y="7" width="1" height="1"/></g></svg>
<div class="t" style="left:715px;top:469.90px;font-size:11.2px;line-height:13.44px;font-weight:400;color:#1f2328;-webkit-text-stroke:0.45px #1f2328;">1 / 1 / 0</div>
<div class="r" style="left:119px;top:487px;width:639px;height:28px;background:#fff;border:1.5px solid #3d5ab5;border-radius:4px"></div>
<div class="t" style="left:127px;top:493.67px;font-size:12.5px;line-height:15.0px;font-weight:400;color:#15171a;">Проверяю примечание</div>
<div class="r" style="left:261px;top:495px;width:1px;height:14px;background:#111;"></div>
<div class="t" style="left:773px;top:468.86px;font-size:12.3px;line-height:14.76px;font-weight:400;color:#1f2328;">1282 дн.</div>
<div class="t" style="left:773px;top:487.28px;font-size:10.8px;line-height:12.96px;font-weight:400;color:#ee3a3a;-webkit-text-stroke:0.45px #ee3a3a;">10 дн.</div>
<div class="t" style="left:904px;top:469.04px;font-size:12.1px;line-height:14.52px;font-weight:400;color:#1f2328;">14.02.2022</div>
<div class="t" style="left:904px;top:487.09px;font-size:11px;line-height:13.2px;font-weight:400;color:#ee3a3a;-webkit-text-stroke:0.45px #ee3a3a;">31.05.2021 (+259)</div>
<div class="t" style="left:1037px;top:469.04px;font-size:12.1px;line-height:14.52px;font-weight:400;color:#1f2328;">18.08.2025</div>
<div class="t" style="left:1037px;top:487.09px;font-size:11px;line-height:13.2px;font-weight:400;color:#ee3a3a;-webkit-text-stroke:0.45px #ee3a3a;">09.06.2021 (+1531)</div>
<div class="t" style="left:1164px;top:468.86px;font-size:12.3px;line-height:14.76px;font-weight:400;color:#4458b8;width:33px;text-align:center;">2/2</div>
<div class="t" style="left:1198px;top:468.86px;font-size:12.3px;line-height:14.76px;font-weight:400;color:#1f2328;width:45px;text-align:center;">100%</div>
<div class="t" style="left:1244px;top:468.86px;font-size:12.3px;line-height:14.76px;font-weight:400;color:#1f2328;width:83px;text-align:center;">0 %</div>
<div class="t" style="left:1244px;top:488.15px;font-size:10.4px;line-height:12.48px;font-weight:400;color:#93979e;width:83px;text-align:center;">о: 11,7 %</div>
<svg class="r" style="left:1346.5px;top:467px" width="16" height="16" viewBox="0 0 16 16"><circle cx="8" cy="8" r="8" fill="#4caf50"/><path d="M5 8.4 L7.1 10.3 L11 6.2" fill="none" stroke="#fff" stroke-width="1.8" stroke-linecap="round" stroke-linejoin="round"/></svg>
<div class="t" style="left:1365.5px;top:468.67px;font-size:12.5px;line-height:15.0px;font-weight:400;color:#1f2328;">Готово</div>
<div class="t" style="left:1423px;top:468.86px;font-size:12.3px;line-height:14.76px;font-weight:400;color:#4458b8;width:33px;text-align:center;">1/1</div>
<svg class="r" style="left:1464px;top:467px" width="16" height="16" viewBox="0 0 16 16"><circle cx="8" cy="8" r="7.4" fill="none" stroke="#4052b5" stroke-width="1.0"/><path d="M8 4.3 V11.7 M4.3 8 H11.7" stroke="#4052b5" stroke-width="1.0"/></svg>
<div class="r" style="left:1495px;top:466px;width:164px;height:25px;border-radius:5px;background:#e2e4e8;overflow:hidden"><div class="r" style="left:1px;top:1px;width:162px;height:23px;background:#f8f9fa;border-radius:4px"></div><div class="r" style="left:0px;top:0;width:31px;height:25px;background:#4caf50"></div><div class="r" style="left:31px;top:0;width:52px;height:25px;background:#4caf50"></div><div class="r" style="left:83px;top:0;width:49px;height:25px;background:#4caf50"></div><div class="r" style="left:31px;top:0;width:1px;height:25px;background:#46a34a"></div><div class="r" style="left:83px;top:0;width:1px;height:25px;background:#46a34a"></div><div class="r" style="left:132px;top:1px;width:1px;height:23px;background:#e2e4e8"></div></div>
<svg class="r" style="left:1503px;top:472px" width="15" height="12.50" viewBox="0 0 15 12.5"><rect x="0.4" y="4.8" width="4.2" height="7.6" rx="0.5" fill="#ffffff"/><path d="M5.6 12.4 V4.7 L8.5 0.7 Q8.8 0.3 9.4 0.3 H11.3 Q12 0.3 12 1 V4.7 H14.5 Q15.2 4.7 15.2 5.4 V9.4 L14.3 12 Q14.1 12.4 13.6 12.4 Z" fill="#ffffff"/></svg>
<svg class="r" style="left:1535px;top:472px" width="13" height="11.50" viewBox="0 0 13 11.5"><path d="M6.5 0.3 Q6.9 0.3 7.1 0.7 L12.8 10.6 Q13.1 11.3 12.3 11.3 H0.7 Q-0.1 11.3 0.2 10.6 L5.9 0.7 Q6.1 0.3 6.5 0.3 Z" fill="#ffffff"/><rect x="5.5" y="3.4" width="2" height="2" fill="#4caf50"/><rect x="5.5" y="6.5" width="2" height="3.7" fill="#4caf50"/></svg>
<div class="t" style="left:1552px;top:472.64px;font-size:12px;line-height:14.4px;font-weight:700;color:#ffffff;">3/3</div>
<svg class="r" style="left:1587px;top:472px" width="12" height="12" viewBox="0 0 13 13"><path d="M0.3 5.2 L4.6 0.9 Q5.3 0.3 6.3 0.3 L9.4 0.6 L9.6 1.5 L8.4 2.3 L7.6 3.4 L3.2 7.8 Z" fill="#ffffff"/><path d="M6.9 6.4 L11.8 11.6" stroke="#ffffff" stroke-width="2.6" stroke-linecap="round"/></svg>
<div class="t" style="left:1605px;top:472.64px;font-size:12px;line-height:14.4px;font-weight:700;color:#ffffff;">1/1</div>
<svg class="r" style="left:1637px;top:472px" width="13" height="13" viewBox="0 0 13 13"><polygon points="6.50,0.80 8.18,4.69 12.40,5.08 9.21,7.88 10.14,12.02 6.50,9.85 2.86,12.02 3.79,7.88 0.60,5.08 4.82,4.69" fill="none" stroke="#1d2024" stroke-width="1.15" stroke-linejoin="miter"/></svg>
<div class="t" style="left:119px;top:532.86px;font-size:12.3px;line-height:14.76px;font-weight:400;color:#1f2328;">Обратная засыпка грунта</div>
<div class="t" style="left:773px;top:532.86px;font-size:12.3px;line-height:14.76px;font-weight:400;color:#1f2328;">232 дн.</div>
<div class="t" style="left:773px;top:551.28px;font-size:10.8px;line-height:12.96px;font-weight:400;color:#93979e;-webkit-text-stroke:0.45px #93979e;">10 дн.</div>
<svg class="r" style="left:774px;top:569.5px" width="15" height="10" viewBox="0 0 15 10"><path d="M0.8 5 H14 M9.6 0.7 L14 5 L9.6 9.3" fill="none" stroke="#f5841f" stroke-width="1.1" stroke-linecap="round" stroke-linejoin="round"/></svg>
<div class="t" style="left:796px;top:569.09px;font-size:11px;line-height:13.2px;font-weight:400;color:#f5841f;-webkit-text-stroke:0.45px #f5841f;">433 дн. (+423 дн.)</div>
<div class="t" style="left:904px;top:533.04px;font-size:12.1px;line-height:14.52px;font-weight:400;color:#1f2328;">22.03.2022</div>
<div class="t" style="left:904px;top:551.09px;font-size:11px;line-height:13.2px;font-weight:400;color:#ee3a3a;-webkit-text-stroke:0.45px #ee3a3a;"><s>25.07.2021 (+240)</s></div>
<svg class="r" style="left:904px;top:569.5px" width="15" height="10" viewBox="0 0 15 10"><path d="M0.8 5 H14 M9.6 0.7 L14 5 L9.6 9.3" fill="none" stroke="#f5841f" stroke-width="1.1" stroke-linecap="round" stroke-linejoin="round"/></svg>
<div class="t" style="left:926px;top:569.09px;font-size:11px;line-height:13.2px;font-weight:400;color:#f5841f;-webkit-text-stroke:0.45px #f5841f;">25.07.2021</div>
<div class="t" style="left:1037px;top:533.04px;font-size:12.1px;line-height:14.52px;font-weight:400;color:#1f2328;">—</div>
<div class="t" style="left:1037px;top:551.09px;font-size:11px;line-height:13.2px;font-weight:400;color:#ee3a3a;-webkit-text-stroke:0.45px #ee3a3a;"><s>03.08.2021 (+1597)</s></div>
<svg class="r" style="left:1037px;top:569.5px" width="15" height="10" viewBox="0 0 15 10"><path d="M0.8 5 H14 M9.6 0.7 L14 5 L9.6 9.3" fill="none" stroke="#f5841f" stroke-width="1.1" stroke-linecap="round" stroke-linejoin="round"/></svg>
<div class="t" style="left:1059px;top:569.09px;font-size:11px;line-height:13.2px;font-weight:400;color:#f5841f;-webkit-text-stroke:0.45px #f5841f;">30.09.2022 (+423)</div>
<div class="t" style="left:1164px;top:532.86px;font-size:12.3px;line-height:14.76px;font-weight:400;color:#4458b8;width:33px;text-align:center;">2/5</div>
<div class="t" style="left:1198px;top:532.86px;font-size:12.3px;line-height:14.76px;font-weight:400;color:#1f2328;width:45px;text-align:center;">90%</div>
<div class="t" style="left:1244px;top:532.86px;font-size:12.3px;line-height:14.76px;font-weight:400;color:#1f2328;width:83px;text-align:center;">—</div>
<div class="r" style="left:1340px;top:530px;width:70px;height:24px;background:#e4e6ea;border:1px solid #dcdfe3;border-radius:4px"></div>
<svg class="r" style="left:1348px;top:533.5px" width="16" height="16" viewBox="0 0 16 16"><circle cx="8" cy="8" r="7.3" fill="none" stroke="#b9bdc3" stroke-width="1.1"/><path d="M4.8 8.2 L7 10.4 L11.2 5.8" fill="none" stroke="#b9bdc3" stroke-width="1.1" stroke-linecap="round" stroke-linejoin="round"/></svg>
<div class="t" style="left:1367px;top:535.11px;font-size:11.5px;line-height:13.8px;font-weight:400;color:#acb0b6;">Готово</div>
<svg class="r" style="left:1464px;top:531px" width="16" height="16" viewBox="0 0 16 16"><circle cx="8" cy="8" r="7.4" fill="none" stroke="#4052b5" stroke-width="1.0"/><path d="M8 4.3 V11.7 M4.3 8 H11.7" stroke="#4052b5" stroke-width="1.0"/></svg>
<div class="r" style="left:1495px;top:530px;width:164px;height:25px;border-radius:5px;background:#e2e4e8;overflow:hidden"><div class="r" style="left:1px;top:1px;width:162px;height:23px;background:#f8f9fa;border-radius:4px"></div><div class="r" style="left:0px;top:0;width:36px;height:25px;background:#e4e6ea"></div><div class="r" style="left:36px;top:0;width:56px;height:25px;background:#ee3a3a"></div><div class="r" style="left:128px;top:1px;width:1px;height:23px;background:#e2e4e8"></div></div>
<svg class="r" style="left:1506px;top:536px" width="15" height="12.50" viewBox="0 0 15 12.5"><rect x="0.8" y="5.2" width="3.3" height="7" rx="0.3" fill="#b9bdc5"/><path d="M5.9 11.6 V5.3 L8.8 1.2 Q9.4 0.6 10.1 0.9 Q10.9 1.3 10.6 2.4 L10 5 H14 Q14.6 5 14.6 5.7 V9.2 L13.8 11.3 Q13.6 11.8 13 11.8 H6.1" fill="none" stroke="#c3c7cc" stroke-width="1.05" stroke-linejoin="round"/></svg>
<svg class="r" style="left:1541px;top:536px" width="13" height="11.50" viewBox="0 0 13 11.5"><path d="M6.5 0.3 Q6.9 0.3 7.1 0.7 L12.8 10.6 Q13.1 11.3 12.3 11.3 H0.7 Q-0.1 11.3 0.2 10.6 L5.9 0.7 Q6.1 0.3 6.5 0.3 Z" fill="#ffffff"/><rect x="5.5" y="3.4" width="2" height="2" fill="#ee3a3a"/><rect x="5.5" y="6.5" width="2" height="3.7" fill="#ee3a3a"/></svg>
<div class="t" style="left:1559px;top:536.64px;font-size:12px;line-height:14.4px;font-weight:700;color:#ffffff;">0/2</div>
<svg class="r" style="left:1598px;top:536px" width="12" height="12" viewBox="0 0 13 13"><path d="M0.3 5.2 L4.6 0.9 Q5.3 0.3 6.3 0.3 L9.4 0.6 L9.6 1.5 L8.4 2.3 L7.6 3.4 L3.2 7.8 Z" fill="#1d2024"/><path d="M6.9 6.4 L11.8 11.6" stroke="#1d2024" stroke-width="2.6" stroke-linecap="round"/></svg>
<svg class="r" style="left:1634px;top:536px" width="13" height="13" viewBox="0 0 13 13"><polygon points="6.50,0.80 8.18,4.69 12.40,5.08 9.21,7.88 10.14,12.02 6.50,9.85 2.86,12.02 3.79,7.88 0.60,5.08 4.82,4.69" fill="none" stroke="#1d2024" stroke-width="1.15" stroke-linejoin="miter"/></svg>
<svg class="r" style="left:99px;top:608px" width="7" height="4" viewBox="0 0 7 4"><path d="M0 0 H7 L3.5 3.8 Z" fill="#2f8ff0"/></svg>
<div class="t" style="left:109px;top:601.67px;font-size:12.5px;line-height:15.0px;font-weight:400;color:#1f2328;-webkit-text-stroke:0.45px #1f2328;letter-spacing:0.42px;">Устройство конструкций ниже отм. 0.000</div>
<div class="t" style="left:109px;top:623.56px;font-size:10.5px;line-height:12.6px;font-weight:400;color:#a3a7ad;">Комментарий</div>
<div class="t" style="left:773px;top:601.86px;font-size:12.3px;line-height:14.76px;font-weight:400;color:#1f2328;">385 дн.</div>
<div class="t" style="left:773px;top:620.28px;font-size:10.8px;line-height:12.96px;font-weight:400;color:#93979e;-webkit-text-stroke:0.45px #93979e;">1078 дн.</div>
<svg class="r" style="left:904px;top:601px" width="16" height="16" viewBox="0 0 16 16"><circle cx="8" cy="8" r="8" fill="#ee3a3a"/><rect x="6.9" y="3.2" width="2.2" height="6.3" rx="0.6" fill="#fff"/><rect x="6.9" y="10.9" width="2.2" height="2.1" rx="0.4" fill="#fff"/></svg>
<div class="t" style="left:923px;top:603.04px;font-size:12.1px;line-height:14.52px;font-weight:400;color:#1f2328;">20.10.2023</div>
<div class="t" style="left:904px;top:621.09px;font-size:11px;line-height:13.2px;font-weight:400;color:#ee3a3a;-webkit-text-stroke:0.45px #ee3a3a;">26.11.2021 (+693)</div>
<svg class="r" style="left:1036.5px;top:601px" width="16" height="16" viewBox="0 0 16 16"><circle cx="8" cy="8" r="8" fill="#ee3a3a"/><rect x="6.9" y="3.2" width="2.2" height="6.3" rx="0.6" fill="#fff"/><rect x="6.9" y="10.9" width="2.2" height="2.1" rx="0.4" fill="#fff"/></svg>
<div class="t" style="left:1056px;top:603.04px;font-size:12.1px;line-height:14.52px;font-weight:400;color:#1f2328;">—</div>
<div class="t" style="left:1037px;top:621.09px;font-size:11px;line-height:13.2px;font-weight:400;color:#ee3a3a;-webkit-text-stroke:0.45px #ee3a3a;">07.11.2024 (+405)</div>
<div class="t" style="left:1198px;top:601.86px;font-size:12.3px;line-height:14.76px;font-weight:400;color:#1f2328;width:45px;text-align:center;">29%</div>
<div class="t" style="left:1244px;top:601.86px;font-size:12.3px;line-height:14.76px;font-weight:400;color:#1f2328;width:83px;text-align:center;">68 850,14 %</div>
<div class="t" style="left:1244px;top:621.15px;font-size:10.4px;line-height:12.48px;font-weight:400;color:#93979e;width:83px;text-align:center;">о: 120,79 %</div>
<div class="t" style="left:1328px;top:601.86px;font-size:12.3px;line-height:14.76px;font-weight:400;color:#1f2328;width:94px;text-align:center;">1/5</div>
<svg class="r" style="left:1464px;top:600px" width="16" height="16" viewBox="0 0 16 16"><circle cx="8" cy="8" r="7.4" fill="none" stroke="#4052b5" stroke-width="1.0"/><path d="M8 4.3 V11.7 M4.3 8 H11.7" stroke="#4052b5" stroke-width="1.0"/></svg>
<svg class="r" style="left:1499.3px;top:600px" width="16" height="16" viewBox="0 0 16 16"><path d="M4.8 0.5 V3.3 M11.2 0.5 V3.3" stroke="#ee3a3a" stroke-width="1.1"/><rect x="1" y="2.3" width="14" height="13" rx="2" fill="none" stroke="#ee3a3a" stroke-width="1.05" opacity="0.9"/><path d="M1 6 H15" stroke="#ee3a3a" stroke-width="1.05" opacity="0.9"/><path d="M6 8 L10.8 10.6 L6 13.2 Z" fill="#ee3a3a"/></svg>
<div class="t" style="left:1517.7px;top:601.86px;font-size:12.3px;line-height:14.76px;font-weight:400;color:#ee3a3a;">1</div>
<svg class="r" style="left:1541px;top:600px" width="16" height="16" viewBox="0 0 16 16"><path d="M4.8 0.5 V3.3 M11.2 0.5 V3.3" stroke="#ee3a3a" stroke-width="1.1"/><rect x="1" y="2.3" width="14" height="13" rx="2" fill="none" stroke="#ee3a3a" stroke-width="1.05" opacity="0.9"/><path d="M1 6 H15" stroke="#ee3a3a" stroke-width="1.05" opacity="0.9"/><rect x="5.8" y="8.1" width="4.4" height="4.4" fill="#ee3a3a"/></svg>
<div class="t" style="left:1559.3px;top:601.86px;font-size:12.3px;line-height:14.76px;font-weight:400;color:#ee3a3a;">4</div>
<svg class="r" style="left:1586px;top:603px" width="12.5" height="11.06" viewBox="0 0 13 11.5"><path d="M6.5 0.3 Q6.9 0.3 7.1 0.7 L12.8 10.6 Q13.1 11.3 12.3 11.3 H0.7 Q-0.1 11.3 0.2 10.6 L5.9 0.7 Q6.1 0.3 6.5 0.3 Z" fill="#4caf50"/><rect x="5.5" y="3.4" width="2" height="2" fill="#fff"/><rect x="5.5" y="6.5" width="2" height="3.7" fill="#fff"/></svg>
<div class="t" style="left:1602.5px;top:601.86px;font-size:12.3px;line-height:14.76px;font-weight:400;color:#4caf50;">0</div>
<svg class="r" style="left:1630px;top:602px" width="12" height="12" viewBox="0 0 13 13"><path d="M0.3 5.2 L4.6 0.9 Q5.3 0.3 6.3 0.3 L9.4 0.6 L9.6 1.5 L8.4 2.3 L7.6 3.4 L3.2 7.8 Z" fill="#4caf50"/><path d="M6.9 6.4 L11.8 11.6" stroke="#4caf50" stroke-width="2.6" stroke-linecap="round"/></svg>
<div class="t" style="left:1646px;top:601.86px;font-size:12.3px;line-height:14.76px;font-weight:400;color:#4caf50;">0</div>
<div class="t" style="left:119px;top:656.86px;font-size:12.3px;line-height:14.76px;font-weight:400;color:#1f2328;">Устройство ленточного фундамента 2.0</div>
<div class="t" style="left:773px;top:656.86px;font-size:12.3px;line-height:14.76px;font-weight:400;color:#1f2328;">374 дн.</div>
<div class="t" style="left:773px;top:675.28px;font-size:10.8px;line-height:12.96px;font-weight:400;color:#93979e;-webkit-text-stroke:0.45px #93979e;">375 дн.</div>
<div class="t" style="left:904px;top:657.04px;font-size:12.1px;line-height:14.52px;font-weight:400;color:#1f2328;">20.10.2023</div>
<div class="t" style="left:904px;top:675.09px;font-size:11px;line-height:13.2px;font-weight:400;color:#ee3a3a;-webkit-text-stroke:0.45px #ee3a3a;">19.10.2023 (+1)</div>
<div class="t" style="left:1037px;top:657.04px;font-size:12.1px;line-height:14.52px;font-weight:400;color:#1f2328;">—</div>
<div class="t" style="left:1037px;top:675.09px;font-size:11px;line-height:13.2px;font-weight:400;color:#ee3a3a;-webkit-text-stroke:0.45px #ee3a3a;">27.10.2024 (+416)</div>
<div class="t" style="left:1198px;top:656.86px;font-size:12.3px;line-height:14.76px;font-weight:400;color:#1f2328;width:45px;text-align:center;">20%</div>
<div class="t" style="left:1244px;top:656.86px;font-size:12.3px;line-height:14.76px;font-weight:400;color:#1f2328;width:83px;text-align:center;">0 %</div>
<div class="t" style="left:1244px;top:676.15px;font-size:10.4px;line-height:12.48px;font-weight:400;color:#93979e;width:83px;text-align:center;">о: 3 235,16 %</div>
<div class="r" style="left:1340px;top:654px;width:70px;height:24px;background:#fafbfb;border:1px solid #dfe2e6;border-radius:4px"></div>
<svg class="r" style="left:1348px;top:657.5px" width="16" height="16" viewBox="0 0 16 16"><circle cx="8" cy="8" r="7.3" fill="none" stroke="#2a2d33" stroke-width="1.1"/><path d="M4.8 8.2 L7 10.4 L11.2 5.8" fill="none" stroke="#2a2d33" stroke-width="1.1" stroke-linecap="round" stroke-linejoin="round"/></svg>
<div class="t" style="left:1367px;top:659.11px;font-size:11.5px;line-height:13.8px;font-weight:400;color:#1f2328;">Готово</div>
<svg class="r" style="left:1464px;top:655px" width="16" height="16" viewBox="0 0 16 16"><circle cx="8" cy="8" r="7.4" fill="none" stroke="#4052b5" stroke-width="1.0"/><path d="M8 4.3 V11.7 M4.3 8 H11.7" stroke="#4052b5" stroke-width="1.0"/></svg>
<div class="r" style="left:1495px;top:654px;width:164px;height:25px;border-radius:5px;background:#e2e4e8;overflow:hidden"><div class="r" style="left:1px;top:1px;width:162px;height:23px;background:#f8f9fa;border-radius:4px"></div><div class="r" style="left:0px;top:0;width:41px;height:25px;background:#e4e6ea"></div><div class="r" style="left:41px;top:1px;width:1px;height:23px;background:#e2e4e8"></div><div class="r" style="left:82px;top:1px;width:1px;height:23px;background:#e2e4e8"></div><div class="r" style="left:122px;top:1px;width:1px;height:23px;background:#e2e4e8"></div></div>
<svg class="r" style="left:1508.5px;top:660px" width="15" height="12.50" viewBox="0 0 15 12.5"><rect x="0.8" y="5.2" width="3.3" height="7" rx="0.3" fill="#b9bdc5"/><path d="M5.9 11.6 V5.3 L8.8 1.2 Q9.4 0.6 10.1 0.9 Q10.9 1.3 10.6 2.4 L10 5 H14 Q14.6 5 14.6 5.7 V9.2 L13.8 11.3 Q13.6 11.8 13 11.8 H6.1" fill="none" stroke="#c3c7cc" stroke-width="1.05" stroke-linejoin="round"/></svg>
<svg class="r" style="left:1550.5px;top:660.5px" width="13" height="11.50" viewBox="0 0 13 11.5"><path d="M6.5 0.3 Q6.9 0.3 7.1 0.7 L12.8 10.6 Q13.1 11.3 12.3 11.3 H0.7 Q-0.1 11.3 0.2 10.6 L5.9 0.7 Q6.1 0.3 6.5 0.3 Z" fill="#1d2024"/><rect x="5.5" y="3.4" width="2" height="2" fill="#fff"/><rect x="5.5" y="6.5" width="2" height="3.7" fill="#fff"/></svg>
<svg class="r" style="left:1591.5px;top:660px" width="12" height="12" viewBox="0 0 13 13"><path d="M0.3 5.2 L4.6 0.9 Q5.3 0.3 6.3 0.3 L9.4 0.6 L9.6 1.5 L8.4 2.3 L7.6 3.4 L3.2 7.8 Z" fill="#1d2024"/><path d="M6.9 6.4 L11.8 11.6" stroke="#1d2024" stroke-width="2.6" stroke-linecap="round"/></svg>
<svg class="r" style="left:1631.5px;top:660px" width="13" height="13" viewBox="0 0 13 13"><polygon points="6.50,0.80 8.18,4.69 12.40,5.08 9.21,7.88 10.14,12.02 6.50,9.85 2.86,12.02 3.79,7.88 0.60,5.08 4.82,4.69" fill="none" stroke="#1d2024" stroke-width="1.15" stroke-linejoin="miter"/></svg>
<div class="t" style="left:119px;top:711.86px;font-size:12.3px;line-height:14.76px;font-weight:400;color:#1f2328;">Устройство монолитного ж/б каркаса</div>
<div class="t" style="left:773px;top:711.86px;font-size:12.3px;line-height:14.76px;font-weight:400;color:#1f2328;">150 дн.</div>
<div class="t" style="left:773px;top:730.28px;font-size:10.8px;line-height:12.96px;font-weight:400;color:#93979e;-webkit-text-stroke:0.45px #93979e;">1078 дн.</div>
<div class="t" style="left:904px;top:712.04px;font-size:12.1px;line-height:14.52px;font-weight:400;color:#1f2328;">21.10.2023</div>
<div class="t" style="left:904px;top:730.09px;font-size:11px;line-height:13.2px;font-weight:400;color:#ee3a3a;-webkit-text-stroke:0.45px #ee3a3a;">26.11.2021 (+694)</div>
<div class="t" style="left:1037px;top:712.04px;font-size:12.1px;line-height:14.52px;font-weight:400;color:#1f2328;">18.03.2024</div>
<div class="t" style="left:1037px;top:730.09px;font-size:11px;line-height:13.2px;font-weight:400;color:#93979e;-webkit-text-stroke:0.45px #93979e;">07.11.2024</div>
<div class="t" style="left:1198px;top:711.86px;font-size:12.3px;line-height:14.76px;font-weight:400;color:#1f2328;width:45px;text-align:center;">100%</div>
<div class="t" style="left:1244px;top:711.86px;font-size:12.3px;line-height:14.76px;font-weight:400;color:#1f2328;width:83px;text-align:center;">—</div>
<svg class="r" style="left:1346.5px;top:710px" width="16" height="16" viewBox="0 0 16 16"><circle cx="8" cy="8" r="8" fill="#4caf50"/><path d="M5 8.4 L7.1 10.3 L11 6.2" fill="none" stroke="#fff" stroke-width="1.8" stroke-linecap="round" stroke-linejoin="round"/></svg>
<div class="t" style="left:1365.5px;top:711.67px;font-size:12.5px;line-height:15.0px;font-weight:400;color:#1f2328;">Готово</div>
<svg class="r" style="left:1464px;top:710px" width="16" height="16" viewBox="0 0 16 16"><circle cx="8" cy="8" r="7.4" fill="none" stroke="#4052b5" stroke-width="1.0"/><path d="M8 4.3 V11.7 M4.3 8 H11.7" stroke="#4052b5" stroke-width="1.0"/></svg>
<div class="r" style="left:1495px;top:709px;width:164px;height:25px;border-radius:5px;background:#e2e4e8;overflow:hidden"><div class="r" style="left:1px;top:1px;width:162px;height:23px;background:#f8f9fa;border-radius:4px"></div><div class="r" style="left:0px;top:0;width:41px;height:25px;background:#4caf50"></div><div class="r" style="left:41px;top:1px;width:1px;height:23px;background:#e2e4e8"></div><div class="r" style="left:82px;top:1px;width:1px;height:23px;background:#e2e4e8"></div><div class="r" style="left:122px;top:1px;width:1px;height:23px;background:#e2e4e8"></div></div>
<svg class="r" style="left:1508.5px;top:715px" width="15" height="12.50" viewBox="0 0 15 12.5"><rect x="0.4" y="4.8" width="4.2" height="7.6" rx="0.5" fill="#ffffff"/><path d="M5.6 12.4 V4.7 L8.5 0.7 Q8.8 0.3 9.4 0.3 H11.3 Q12 0.3 12 1 V4.7 H14.5 Q15.2 4.7 15.2 5.4 V9.4 L14.3 12 Q14.1 12.4 13.6 12.4 Z" fill="#ffffff"/></svg>
<svg class="r" style="left:1550.5px;top:715.5px" width="13" height="11.50" viewBox="0 0 13 11.5"><path d="M6.5 0.3 Q6.9 0.3 7.1 0.7 L12.8 10.6 Q13.1 11.3 12.3 11.3 H0.7 Q-0.1 11.3 0.2 10.6 L5.9 0.7 Q6.1 0.3 6.5 0.3 Z" fill="#1d2024"/><rect x="5.5" y="3.4" width="2" height="2" fill="#fff"/><rect x="5.5" y="6.5" width="2" height="3.7" fill="#fff"/></svg>
<svg class="r" style="left:1591.5px;top:715px" width="12" height="12" viewBox="0 0 13 13"><path d="M0.3 5.2 L4.6 0.9 Q5.3 0.3 6.3 0.3 L9.4 0.6 L9.6 1.5 L8.4 2.3 L7.6 3.4 L3.2 7.8 Z" fill="#1d2024"/><path d="M6.9 6.4 L11.8 11.6" stroke="#1d2024" stroke-width="2.6" stroke-linecap="round"/></svg>
<svg class="r" style="left:1631.5px;top:715px" width="13" height="13" viewBox="0 0 13 13"><polygon points="6.50,0.80 8.18,4.69 12.40,5.08 9.21,7.88 10.14,12.02 6.50,9.85 2.86,12.02 3.79,7.88 0.60,5.08 4.82,4.69" fill="none" stroke="#1d2024" stroke-width="1.15" stroke-linejoin="miter"/></svg>
<div class="t" style="left:119px;top:766.86px;font-size:12.3px;line-height:14.76px;font-weight:400;color:#1f2328;">Устройство плит теплоизоляционного слоя под плитой пола подвала</div>
<div class="t" style="left:119px;top:788.46px;font-size:10.6px;line-height:12.72px;font-weight:400;color:#a3a7ad;">триггеры</div>
<div class="t" style="left:773px;top:766.86px;font-size:12.3px;line-height:14.76px;font-weight:400;color:#1f2328;">655 дн.</div>
<div class="t" style="left:773px;top:785.28px;font-size:10.8px;line-height:12.96px;font-weight:400;color:#93979e;-webkit-text-stroke:0.45px #93979e;">10 дн.</div>
<div class="t" style="left:904px;top:767.04px;font-size:12.1px;line-height:14.52px;font-weight:400;color:#1f2328;">12.08.2025</div>
<div class="t" style="left:904px;top:785.09px;font-size:11px;line-height:13.2px;font-weight:400;color:#ee3a3a;-webkit-text-stroke:0.45px #ee3a3a;">19.10.2023 (+663)</div>
<div class="t" style="left:1037px;top:767.04px;font-size:12.1px;line-height:14.52px;font-weight:400;color:#1f2328;">—</div>
<div class="t" style="left:1037px;top:785.09px;font-size:11px;line-height:13.2px;font-weight:400;color:#ee3a3a;-webkit-text-stroke:0.45px #ee3a3a;">28.10.2023 (+781)</div>
<div class="t" style="left:1198px;top:766.86px;font-size:12.3px;line-height:14.76px;font-weight:400;color:#1f2328;width:45px;text-align:center;">55%</div>
<div class="t" style="left:1244px;top:766.86px;font-size:12.3px;line-height:14.76px;font-weight:400;color:#1f2328;width:83px;text-align:center;">—</div>
<div class="r" style="left:1340px;top:764px;width:70px;height:24px;background:#fafbfb;border:1px solid #dfe2e6;border-radius:4px"></div>
<svg class="r" style="left:1348px;top:767.5px" width="16" height="16" viewBox="0 0 16 16"><circle cx="8" cy="8" r="7.3" fill="none" stroke="#2a2d33" stroke-width="1.1"/><path d="M4.8 8.2 L7 10.4 L11.2 5.8" fill="none" stroke="#2a2d33" stroke-width="1.1" stroke-linecap="round" stroke-linejoin="round"/></svg>
<div class="t" style="left:1367px;top:769.11px;font-size:11.5px;line-height:13.8px;font-weight:400;color:#1f2328;">Готово</div>
<svg class="r" style="left:1464px;top:765px" width="16" height="16" viewBox="0 0 16 16"><circle cx="8" cy="8" r="7.4" fill="none" stroke="#4052b5" stroke-width="1.0"/><path d="M8 4.3 V11.7 M4.3 8 H11.7" stroke="#4052b5" stroke-width="1.0"/></svg>
<div class="r" style="left:1495px;top:764px;width:164px;height:25px;border-radius:5px;background:#e2e4e8;overflow:hidden"><div class="r" style="left:1px;top:1px;width:162px;height:23px;background:#f8f9fa;border-radius:4px"></div><div class="r" style="left:0px;top:0;width:41px;height:25px;background:#e4e6ea"></div><div class="r" style="left:41px;top:1px;width:1px;height:23px;background:#e2e4e8"></div><div class="r" style="left:82px;top:1px;width:1px;height:23px;background:#e2e4e8"></div><div class="r" style="left:122px;top:1px;width:1px;height:23px;background:#e2e4e8"></div></div>
<svg class="r" style="left:1508.5px;top:770px" width="15" height="12.50" viewBox="0 0 15 12.5"><rect x="0.8" y="5.2" width="3.3" height="7" rx="0.3" fill="#b9bdc5"/><path d="M5.9 11.6 V5.3 L8.8 1.2 Q9.4 0.6 10.1 0.9 Q10.9 1.3 10.6 2.4 L10 5 H14 Q14.6 5 14.6 5.7 V9.2 L13.8 11.3 Q13.6 11.8 13 11.8 H6.1" fill="none" stroke="#c3c7cc" stroke-width="1.05" stroke-linejoin="round"/></svg>
<svg class="r" style="left:1550.5px;top:770.5px" width="13" height="11.50" viewBox="0 0 13 11.5"><path d="M6.5 0.3 Q6.9 0.3 7.1 0.7 L12.8 10.6 Q13.1 11.3 12.3 11.3 H0.7 Q-0.1 11.3 0.2 10.6 L5.9 0.7 Q6.1 0.3 6.5 0.3 Z" fill="#1d2024"/><rect x="5.5" y="3.4" width="2" height="2" fill="#fff"/><rect x="5.5" y="6.5" width="2" height="3.7" fill="#fff"/></svg>
<svg class="r" style="left:1591.5px;top:770px" width="12" height="12" viewBox="0 0 13 13"><path d="M0.3 5.2 L4.6 0.9 Q5.3 0.3 6.3 0.3 L9.4 0.6 L9.6 1.5 L8.4 2.3 L7.6 3.4 L3.2 7.8 Z" fill="#1d2024"/><path d="M6.9 6.4 L11.8 11.6" stroke="#1d2024" stroke-width="2.6" stroke-linecap="round"/></svg>
<svg class="r" style="left:1631.5px;top:770px" width="13" height="13" viewBox="0 0 13 13"><polygon points="6.50,0.80 8.18,4.69 12.40,5.08 9.21,7.88 10.14,12.02 6.50,9.85 2.86,12.02 3.79,7.88 0.60,5.08 4.82,4.69" fill="none" stroke="#1d2024" stroke-width="1.15" stroke-linejoin="miter"/></svg>
<div class="t" style="left:119px;top:821.86px;font-size:12.3px;line-height:14.76px;font-weight:400;color:#1f2328;">Гидроизоляция стен цоколя</div>
<div class="t" style="left:119px;top:843.46px;font-size:10.6px;line-height:12.72px;font-weight:400;color:#a3a7ad;">триггеры</div>
<div class="t" style="left:773px;top:820.28px;font-size:10.8px;line-height:12.96px;font-weight:400;color:#93979e;-webkit-text-stroke:0.45px #93979e;">10 дн.</div>
<div class="t" style="left:904px;top:820.09px;font-size:11px;line-height:13.2px;font-weight:400;color:#ee3a3a;-webkit-text-stroke:0.45px #ee3a3a;"><s>19.10.2023 (+790)</s></div>
<svg class="r" style="left:904px;top:838.5px" width="15" height="10" viewBox="0 0 15 10"><path d="M0.8 5 H14 M9.6 0.7 L14 5 L9.6 9.3" fill="none" stroke="#f5841f" stroke-width="1.1" stroke-linecap="round" stroke-linejoin="round"/></svg>
<div class="t" style="left:926px;top:838.09px;font-size:11px;line-height:13.2px;font-weight:400;color:#f5841f;-webkit-text-stroke:0.45px #f5841f;">18.07.2022 (−458)</div>
<div class="t" style="left:1037px;top:820.09px;font-size:11px;line-height:13.2px;font-weight:400;color:#ee3a3a;-webkit-text-stroke:0.45px #ee3a3a;"><s>28.10.2023 (+781)</s></div>
<svg class="r" style="left:1037px;top:838.5px" width="15" height="10" viewBox="0 0 15 10"><path d="M0.8 5 H14 M9.6 0.7 L14 5 L9.6 9.3" fill="none" stroke="#f5841f" stroke-width="1.1" stroke-linecap="round" stroke-linejoin="round"/></svg>
<div class="t" style="left:1059px;top:838.09px;font-size:11px;line-height:13.2px;font-weight:400;color:#f5841f;-webkit-text-stroke:0.45px #f5841f;">27.07.2022 (−458)</div>
<div class="t" style="left:1244px;top:821.86px;font-size:12.3px;line-height:14.76px;font-weight:400;color:#1f2328;width:83px;text-align:center;">3 000 %</div>
<div class="r" style="left:1335px;top:819px;width:80px;height:24px;background:#4caf50;border-radius:3px"></div>
<div class="t" style="left:1335px;top:824.96px;font-size:10.6px;line-height:12.72px;font-weight:400;color:#fff;-webkit-text-stroke:0.45px #fff;width:80px;text-align:center;">Согласовать</div>
<div class="r" style="left:1340px;top:847px;width:70px;height:24px;background:#ee3a3a;border-radius:3px"></div>
<div class="t" style="left:1340px;top:852.96px;font-size:10.6px;line-height:12.72px;font-weight:400;color:#fff;-webkit-text-stroke:0.45px #fff;width:70px;text-align:center;">Отклонить</div>
<svg class="r" style="left:1464px;top:820px" width="16" height="16" viewBox="0 0 16 16"><circle cx="8" cy="8" r="7.4" fill="none" stroke="#4052b5" stroke-width="1.0"/><path d="M8 4.3 V11.7 M4.3 8 H11.7" stroke="#4052b5" stroke-width="1.0"/></svg>
<div class="r" style="left:1495px;top:819px;width:164px;height:25px;border-radius:5px;background:#e2e4e8;overflow:hidden"><div class="r" style="left:1px;top:1px;width:162px;height:23px;background:#f8f9fa;border-radius:4px"></div><div class="r" style="left:0px;top:0;width:41px;height:25px;background:#e4e6ea"></div><div class="r" style="left:41px;top:1px;width:1px;height:23px;background:#e2e4e8"></div><div class="r" style="left:82px;top:1px;width:1px;height:23px;background:#e2e4e8"></div><div class="r" style="left:122px;top:1px;width:1px;height:23px;background:#e2e4e8"></div></div>
<svg class="r" style="left:1508.5px;top:825px" width="15" height="12.50" viewBox="0 0 15 12.5"><rect x="0.8" y="5.2" width="3.3" height="7" rx="0.3" fill="#b9bdc5"/><path d="M5.9 11.6 V5.3 L8.8 1.2 Q9.4 0.6 10.1 0.9 Q10.9 1.3 10.6 2.4 L10 5 H14 Q14.6 5 14.6 5.7 V9.2 L13.8 11.3 Q13.6 11.8 13 11.8 H6.1" fill="none" stroke="#c3c7cc" stroke-width="1.05" stroke-linejoin="round"/></svg>
<svg class="r" style="left:1550.5px;top:825.5px" width="13" height="11.50" viewBox="0 0 13 11.5"><path d="M6.5 0.3 Q6.9 0.3 7.1 0.7 L12.8 10.6 Q13.1 11.3 12.3 11.3 H0.7 Q-0.1 11.3 0.2 10.6 L5.9 0.7 Q6.1 0.3 6.5 0.3 Z" fill="#1d2024"/><rect x="5.5" y="3.4" width="2" height="2" fill="#fff"/><rect x="5.5" y="6.5" width="2" height="3.7" fill="#fff"/></svg>
<svg class="r" style="left:1591.5px;top:825px" width="12" height="12" viewBox="0 0 13 13"><path d="M0.3 5.2 L4.6 0.9 Q5.3 0.3 6.3 0.3 L9.4 0.6 L9.6 1.5 L8.4 2.3 L7.6 3.4 L3.2 7.8 Z" fill="#1d2024"/><path d="M6.9 6.4 L11.8 11.6" stroke="#1d2024" stroke-width="2.6" stroke-linecap="round"/></svg>
<svg class="r" style="left:1631.5px;top:825px" width="13" height="13" viewBox="0 0 13 13"><polygon points="6.50,0.80 8.18,4.69 12.40,5.08 9.21,7.88 10.14,12.02 6.50,9.85 2.86,12.02 3.79,7.88 0.60,5.08 4.82,4.69" fill="none" stroke="#1d2024" stroke-width="1.15" stroke-linejoin="miter"/></svg>
<svg class="r" style="left:0;top:0" width="1696" height="884"><defs><filter id="sh" x="-20%" y="-20%" width="140%" height="140%"><feGaussianBlur in="SourceAlpha" stdDeviation="2.6"/><feOffset dx="0.5" dy="1.5"/><feComponentTransfer><feFuncA type="linear" slope="0.38"/></feComponentTransfer><feMerge><feMergeNode/><feMergeNode in="SourceGraphic"/></feMerge></filter></defs><g filter="url(#sh)"><polygon points="720.91,629.36 401.17,507.17 405.06,500.19 381.00,504.00 396.65,522.67 398.29,514.85 719.69,632.64" fill="#ff0000" stroke="#ff0000" stroke-width="0.4" stroke-linejoin="round"/><circle cx="720.3" cy="631.0" r="1.75" fill="#ff0000"/></g></svg>
<div class="r" style="left:471px;top:496px;width:3px;height:1px;background:#000"></div>
<div class="r" style="left:475px;top:496px;width:3px;height:1px;background:#000"></div>
<div class="r" style="left:474px;top:497px;width:1px;height:14px;background:#000"></div>
<div class="r" style="left:471px;top:511px;width:3px;height:1px;background:#000"></div>
<div class="r" style="left:475px;top:511px;width:3px;height:1px;background:#000"></div>
<div class="r" style="left:1687px;top:6px;width:9px;height:878px;background:#fafafa;"></div>
<svg class="r" style="left:1687px;top:6px" width="9" height="878"><path d="M3 10.8 L7.5 6 L12 10.8 Z" fill="#8b8b8b"/><rect x="3" y="18" width="12" height="188" rx="5" fill="#8b8b8b"/><path d="M3 866.2 L7.5 871 L12 866.2 Z" fill="#8b8b8b"/></svg>
</body></html>
